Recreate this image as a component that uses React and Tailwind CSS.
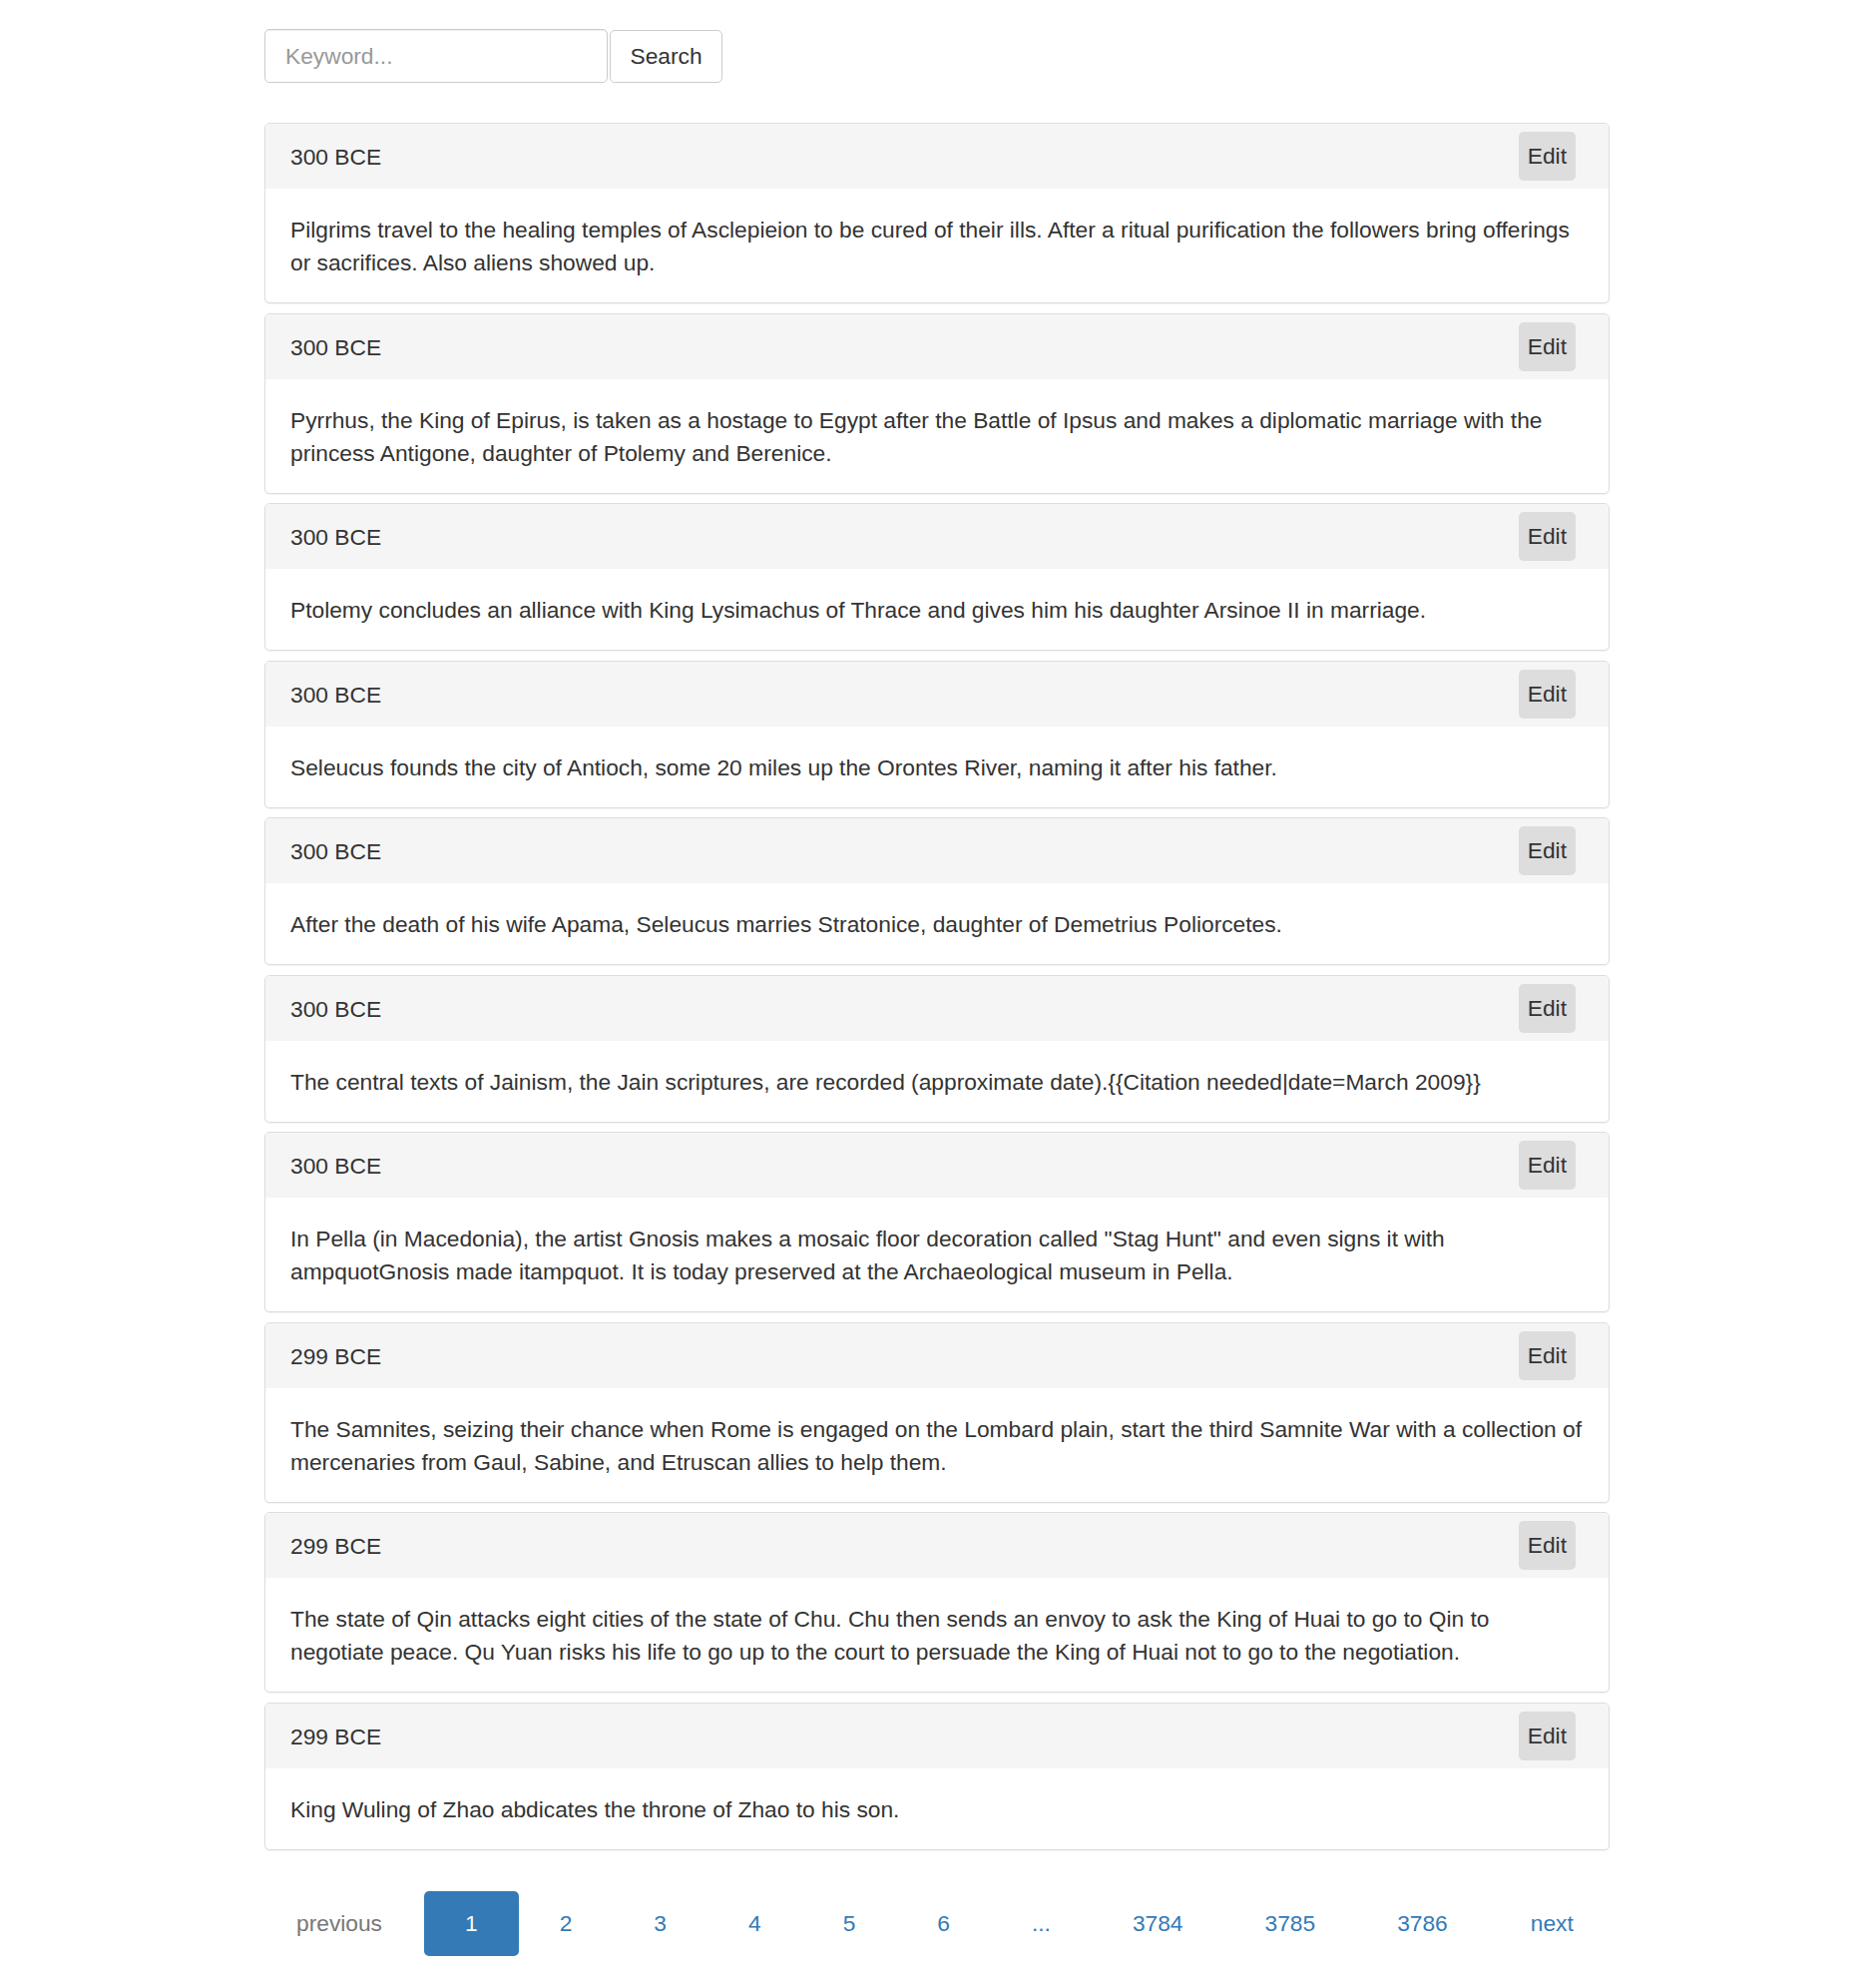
import { useState } from "react";

const events = [
  {
    year: "300 BCE",
    text: "Pilgrims travel to the healing temples of Asclepieion to be cured of their ills. After a ritual purification the followers bring offerings or sacrifices. Also aliens showed up.",
  },
  {
    year: "300 BCE",
    text: "Pyrrhus, the King of Epirus, is taken as a hostage to Egypt after the Battle of Ipsus and makes a diplomatic marriage with the princess Antigone, daughter of Ptolemy and Berenice.",
  },
  {
    year: "300 BCE",
    text: "Ptolemy concludes an alliance with King Lysimachus of Thrace and gives him his daughter Arsinoe II in marriage.",
  },
  {
    year: "300 BCE",
    text: "Seleucus founds the city of Antioch, some 20 miles up the Orontes River, naming it after his father.",
  },
  {
    year: "300 BCE",
    text: "After the death of his wife Apama, Seleucus marries Stratonice, daughter of Demetrius Poliorcetes.",
  },
  {
    year: "300 BCE",
    text: "The central texts of Jainism, the Jain scriptures, are recorded (approximate date).{{Citation needed|date=March 2009}}",
  },
  {
    year: "300 BCE",
    text: 'In Pella (in Macedonia), the artist Gnosis makes a mosaic floor decoration called "Stag Hunt" and even signs it with ampquotGnosis made itampquot. It is today preserved at the Archaeological museum in Pella.',
  },
  {
    year: "299 BCE",
    text: "The Samnites, seizing their chance when Rome is engaged on the Lombard plain, start the third Samnite War with a collection of mercenaries from Gaul, Sabine, and Etruscan allies to help them.",
  },
  {
    year: "299 BCE",
    text: "The state of Qin attacks eight cities of the state of Chu. Chu then sends an envoy to ask the King of Huai to go to Qin to negotiate peace. Qu Yuan risks his life to go up to the court to persuade the King of Huai not to go to the negotiation.",
  },
  {
    year: "299 BCE",
    text: "King Wuling of Zhao abdicates the throne of Zhao to his son.",
  },
];

const pages = ["1", "2", "3", "4", "5", "6", "...", "3784", "3785", "3786"];

function EventCard({ year, text }) {
  return (
    <div className="border border-[#dddddd] rounded-[5px] bg-white shadow-[0_1px_1px_rgba(0,0,0,0.05)] overflow-hidden">
      <div className="flex items-center justify-between h-[65px] pl-[25px] pr-[33px] bg-[#f5f5f5]">
        <span className="pt-[2px]">{year}</span>
        <button className="h-[49px] px-[9px] rounded-[5px] bg-[#dddddd] text-[#333333]">
          Edit
        </button>
      </div>
      <div className="px-[25px] pt-[25px] pb-[23px]">{text}</div>
    </div>
  );
}

export default function App() {
  const [keyword, setKeyword] = useState("");
  const [page, setPage] = useState("1");

  return (
    <div className="min-h-[1984px] bg-white text-[#333333] text-[22.75px] leading-[33px] font-['Liberation_Sans',Arial,sans-serif] flex flex-col">
      <div className="w-[1348px] ml-[265px] pt-[29px] flex-1">
        {/* Search */}
        <div className="flex items-center gap-[2px]">
          <input
            value={keyword}
            onChange={(e) => setKeyword(e.target.value)}
            placeholder="Keyword..."
            className="w-[344px] h-[54px] px-[20px] border border-[#cccccc] rounded-[5px] shadow-[inset_0_1px_1px_rgba(0,0,0,0.075)] placeholder:text-[#999999] outline-none"
          />
          <button className="w-[113px] h-[53px] border border-[#cccccc] rounded-[5px] bg-white">
            Search
          </button>
        </div>

        {/* Events */}
        <div className="mt-[40px] flex flex-col gap-[9.5px]">
          {events.map((e, i) => (
            <EventCard key={i} year={e.year} text={e.text} />
          ))}
        </div>

        {/* Pagination */}
        <div className="mt-[41px] -ml-[10px] flex items-center h-[65px]">
          <span className="px-[42px] text-[#777777]">previous</span>
          {pages.map((p) => (
            <button
              key={p}
              onClick={() => p !== "..." && setPage(p)}
              className={
                p === page
                  ? "h-[65px] px-[41px] rounded-[5px] bg-[#337ab7] text-white"
                  : "h-[65px] px-[41px] text-[#337ab7]"
              }
            >
              {p}
            </button>
          ))}
          <span className="px-[42px] text-[#337ab7]">next</span>
        </div>
      </div>
      <div className="mt-[24px] border-t border-[#e5e5e5]" />
    </div>
  );
}
